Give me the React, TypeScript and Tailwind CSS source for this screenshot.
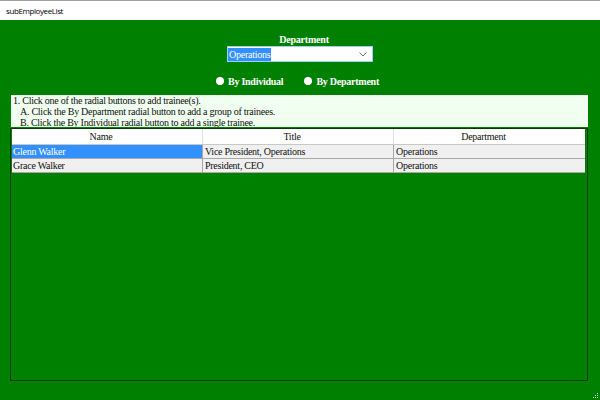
const serif = "font-['Liberation_Serif',serif]";

function Radio({ label }: { label: string }) {
  return (
    <div className="flex items-center gap-[4px]">
      <span className="w-[8px] h-[8px] rounded-full bg-white" />
      <span className="text-[10px] font-bold text-white tracking-[-0.25px]">{label}</span>
    </div>
  );
}

const rows = [
  { name: "Glenn Walker", title: "Vice President, Operations", department: "Operations", selected: true },
  { name: "Grace Walker", title: "President, CEO", department: "Operations", selected: false },
];

export default function App() {
  return (
    <div className={`relative w-[600px] h-[400px] flex flex-col overflow-hidden bg-[#008000] ${serif}`}>
      {/* Title bar */}
      <div className="h-[20px] shrink-0 flex items-center pl-[6px] bg-white border-t border-[#a0a0a0] font-['Open_Sans',sans-serif] text-[8px] tracking-[-0.4px] text-black">
        subEmployeeList
      </div>

      <div className="flex-1 flex flex-col min-h-0 pl-[10px] pr-[12px] pb-[19px]">
        {/* Department picker */}
        <div className="flex flex-col items-center pt-[13px] pl-[10px]">
          <div className="h-[13px] leading-[13px] text-[10px] font-bold text-white tracking-[-0.2px]">Department</div>
          <div className="w-[146px] h-[16px] flex items-center justify-between bg-white pr-[5px] border-[0.5px] border-[#9fd0ff] -ml-[8px]">
            <span className="h-[13px] leading-[13px] px-px text-[10px] tracking-[-0.25px] bg-[#3390ff] text-white">Operations</span>
            <svg width="8" height="5" viewBox="0 0 8 5" fill="none" stroke="#777" strokeWidth="1">
              <path d="M0.5 0.5 4 4 7.5 0.5" />
            </svg>
          </div>
        </div>

        {/* Mode radios */}
        <div className="flex items-center gap-[21px] mt-[12px] ml-[206px] h-[14px]">
          <Radio label="By Individual" />
          <Radio label="By Department" />
        </div>

        {/* Instructions */}
        <div className="mt-[7px] h-[32px] shrink-0 overflow-hidden ml-px bg-[#f0fff0] pl-[2px] text-[10px] tracking-[-0.26px] leading-[11px] text-[#111]">
          <div>1. Click one of the radial buttons to add trainee(s).</div>
          <div className="pl-[7px]">A. Click the By Department radial button to add a group of trainees.</div>
          <div className="pl-[7px]">B. Click the By Individual radial button to add a single trainee.</div>
        </div>

        {/* Employee grid */}
        <div className="mt-[1px] flex-1 min-h-0 border border-[#063806] pl-px text-[10px] tracking-[-0.26px]">
          <div className="grid grid-cols-[191px_191px_191px] w-[573px] h-[16px] bg-white text-[#111] text-center leading-[15px] border-b border-[#c8c8c8]">
            <div className="pr-[12px] border-r border-[#e0e0e0]">Name</div>
            <div className="pr-[12px] border-r border-[#e0e0e0]">Title</div>
            <div className="pr-[12px]">Department</div>
          </div>
          {rows.map((row) => (
            <div key={row.name} className="grid grid-cols-[191px_191px_191px] w-[573px] h-[14px] leading-[13px] bg-[#f0f0f0] text-[#111] border-b border-[#a8a8a8]">
              <div className={`pl-[1px] border-r border-[#a8a8a8] ${row.selected ? "bg-[#3390ff] text-white" : ""}`}>{row.name}</div>
              <div className="pl-[2px] border-r border-[#a8a8a8]">{row.title}</div>
              <div className="pl-[2px]">{row.department}</div>
            </div>
          ))}
        </div>
      </div>

      {/* Resize grip */}
      <svg className="absolute left-[593px] top-[393px]" width="6" height="6" viewBox="0 0 6 6" fill="#cfe6cf">
        <rect x="4" y="0" width="1" height="1" />
        <rect x="2" y="2" width="1" height="1" />
        <rect x="4" y="2" width="1" height="1" />
        <rect x="0" y="4" width="1" height="1" />
        <rect x="2" y="4" width="1" height="1" />
        <rect x="4" y="4" width="1" height="1" />
      </svg>
    </div>
  );
}
